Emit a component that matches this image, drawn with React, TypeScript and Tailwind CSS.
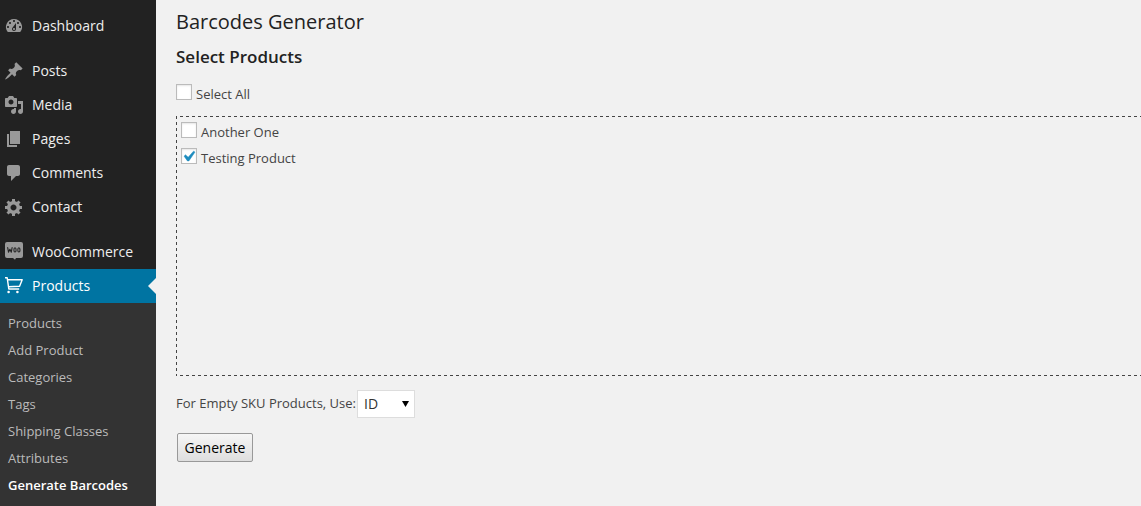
import React, { useState } from "react";

type IconProps = { children: React.ReactNode };

function Glyph({ children }: IconProps) {
  return (
    <svg viewBox="0 0 20 20" className="size-5 shrink-0 fill-current" aria-hidden="true">
      {children}
    </svg>
  );
}

const icons = {
  dashboard: (
    <path d="M3.76 16h12.48A7.998 7.998 0 0 0 10 3a7.998 7.998 0 0 0-6.24 13zM10 4c.55 0 1 .45 1 1s-.45 1-1 1-1-.45-1-1 .45-1 1-1zM6 6c.55 0 1 .45 1 1s-.45 1-1 1-1-.45-1-1 .45-1 1-1zm8 0c.55 0 1 .45 1 1s-.45 1-1 1-1-.45-1-1 .45-1 1-1zm-5.37 5.55L12 7v6c0 1.1-.9 2-2 2s-2-.9-2-2c0-.57.24-1.08.63-1.45zM4 10c.55 0 1 .45 1 1s-.45 1-1 1-1-.45-1-1 .45-1 1-1zm12 0c.55 0 1 .45 1 1s-.45 1-1 1-1-.45-1-1 .45-1 1-1zm-5 3c0-.55-.45-1-1-1s-1 .45-1 1 .45 1 1 1 1-.45 1-1z" />
  ),
  posts: (
    <path d="M10.44 3.02l1.82-1.82 6.36 6.35-1.83 1.82c-1.05-.68-2.48-.57-3.41.36l-.75.75c-.92.93-1.04 2.35-.35 3.41l-1.83 1.82-2.41-2.41-2.8 2.79c-.42.42-3.38 2.71-3.8 2.29s1.86-3.39 2.28-3.81l2.79-2.79L4.1 9.36l1.83-1.82c1.05.69 2.48.57 3.4-.36l.75-.75c.93-.92 1.05-2.35.36-3.41z" />
  ),
  media: (
    <path d="M13 11V4c0-.55-.45-1-1-1h-1.67L9 1H5L3.67 3H2c-.55 0-1 .45-1 1v7c0 .55.45 1 1 1h10c.55 0 1-.45 1-1zM7 4.5c1.38 0 2.5 1.12 2.5 2.5S8.38 9.5 7 9.5 4.5 8.38 4.5 7 5.62 4.5 7 4.5zM14 6h5v10.5c0 1.38-1.12 2.5-2.5 2.5S14 17.88 14 16.5s1.12-2.5 2.5-2.5c.17 0 .34.02.5.05V9h-3V6zm-4 8.05V13h2v3.5c0 1.38-1.12 2.5-2.5 2.5S7 17.88 7 16.5 8.12 14 9.5 14c.17 0 .34.02.5.05z" />
  ),
  pages: <path d="M6 15V2h10v13H6zm-1 1h8v2H3V5h2v11z" />,
  comments: (
    <path d="M5 2h9c1.1 0 2 .9 2 2v7c0 1.1-.9 2-2 2h-2l-5 5v-5H5c-1.1 0-2-.9-2-2V4c0-1.1.9-2 2-2z" />
  ),
  contact: (
    <path d="M18 12h-2.18c-.17.7-.44 1.35-.81 1.93l1.54 1.54-2.1 2.1-1.54-1.54c-.58.36-1.23.63-1.91.79V19H8v-2.18c-.68-.16-1.33-.43-1.91-.79l-1.54 1.54-2.12-2.12 1.54-1.54c-.36-.58-.63-1.23-.79-1.91H1V9.03h2.17c.16-.7.44-1.35.8-1.94L2.43 5.55l2.1-2.1 1.54 1.54c.58-.37 1.24-.64 1.93-.81V2h3v2.18c.68.16 1.33.43 1.91.79l1.54-1.54 2.12 2.12-1.54 1.54c.36.59.64 1.24.8 1.94H18V12zm-8.5 1.5c1.66 0 3-1.34 3-3s-1.34-3-3-3-3 1.34-3 3 1.34 3 3 3z" />
  ),
  woocommerce: (
    <>
      <path d="M3 0h14a2 2 0 0 1 2 2v12a2 2 0 0 1-2 2h-5l-1 1.8L9 16H3a2 2 0 0 1-2-2V2a2 2 0 0 1 2-2z" />
      <g fill="none" stroke="#222" strokeWidth="1.1" strokeLinecap="round" strokeLinejoin="round">
        <path d="M3.7 5.6l.8 4.6 1.4-3 1.4 3 .8-4.6" />
        <ellipse cx="11" cy="7.9" rx="1.1" ry="2.1" />
        <ellipse cx="14.9" cy="7.9" rx="1.1" ry="2.1" />
      </g>
    </>
  ),
  products: (
    <>
      <path
        d="M1 1.8h2.2l1.6 11.2h10.4M3.6 3.7h14.6l-2.6 6.5L4.4 10.8"
        fill="none"
        stroke="currentColor"
        strokeWidth="1.4"
        strokeLinejoin="round"
      />
      <circle cx="4.6" cy="16" r="1.3" />
      <circle cx="13.4" cy="16" r="1.3" />
    </>
  ),
};

type Item = { label: string; icon: React.ReactNode; active?: boolean };

const groups: Item[][] = [
  [{ label: "Dashboard", icon: icons.dashboard }],
  [
    { label: "Posts", icon: icons.posts },
    { label: "Media", icon: icons.media },
    { label: "Pages", icon: icons.pages },
    { label: "Comments", icon: icons.comments },
    { label: "Contact", icon: icons.contact },
  ],
  [
    { label: "WooCommerce", icon: icons.woocommerce },
    { label: "Products", icon: icons.products, active: true },
  ],
];

const submenu = [
  "Products",
  "Add Product",
  "Categories",
  "Tags",
  "Shipping Classes",
  "Attributes",
  "Generate Barcodes",
];

function MenuItem({ label, icon, active }: Item) {
  return (
    <li>
      <a
        href="#"
        className={
          active
            ? "relative flex h-[34px] items-center gap-2 bg-[#0074a2] pl-1 text-sm text-white"
            : "flex h-[34px] items-center gap-2 pl-1 text-sm text-[#eee]"
        }
      >
        <span className={active ? "text-white" : "text-[#999]"}>
          <Glyph>{icon}</Glyph>
        </span>
        {label}
        {active && (
          <span className="absolute top-1/2 right-0 -mt-2 border-8 border-l-0 border-transparent border-r-[#f1f1f1]" />
        )}
      </a>
    </li>
  );
}

function Sidebar() {
  return (
    <nav className="w-[156px] shrink-0 bg-[#222] pt-[9px]">
      <div className="flex flex-col gap-[11px]">
        {groups.map((items, i) => (
          <ul key={i}>
            {items.map((item) => (
              <MenuItem key={item.label} {...item} />
            ))}
          </ul>
        ))}
      </div>
      <ul className="bg-[#333] py-[7px] text-[13px]">
        {submenu.map((label) => (
          <li key={label}>
            <a
              href="#"
              className={
                label === "Generate Barcodes"
                  ? "block pl-2 leading-[27px] font-semibold text-white"
                  : "block pl-2 leading-[27px] text-[#bbb]"
              }
            >
              {label}
            </a>
          </li>
        ))}
      </ul>
    </nav>
  );
}

type CheckProps = { label: string; checked: boolean; onChange: (value: boolean) => void };

function Check({ label, checked, onChange }: CheckProps) {
  return (
    <label className="flex w-fit items-start gap-1 leading-5">
      <span className="relative size-4">
        <input
          type="checkbox"
          checked={checked}
          onChange={(e) => onChange(e.target.checked)}
          className="block size-4 appearance-none border border-[#bbb] bg-white shadow-[inset_0_1px_2px_rgba(0,0,0,0.1)]"
        />
        {checked && (
          <svg
            viewBox="0 0 20 20"
            className="pointer-events-none absolute -top-0.5 -left-[3px] size-[21px] fill-[#1e8cbe] stroke-[#1e8cbe] stroke-[0.5]"
            aria-hidden="true"
          >
            <path d="M14.83 4.89l1.34.94-5.81 8.38H9.02L5.78 9.67l1.34-1.25 2.57 2.4z" />
          </svg>
        )}
      </span>
      {label}
    </label>
  );
}

export default function App() {
  const [another, setAnother] = useState(false);
  const [testing, setTesting] = useState(true);

  return (
    <div className="flex h-screen overflow-hidden bg-[#f1f1f1] font-['Open_Sans',sans-serif] text-[13px] text-[#444]">
      <Sidebar />
      <main className="min-w-0 flex-1 pt-2 pl-5">
        <h1 className="text-xl leading-7 text-[#222]">Barcodes Generator</h1>
        <h2 className="mt-[9px] text-[17px] leading-6 font-semibold text-[#222]">Select Products</h2>
        <div className="mt-[15px]">
          <Check
            label="Select All"
            checked={another && testing}
            onChange={(v) => {
              setAnother(v);
              setTesting(v);
            }}
          />
        </div>
        <div className="mt-3 flex h-[260px] flex-col gap-1.5 overflow-auto bg-[linear-gradient(90deg,#444_50%,transparent_50%),linear-gradient(90deg,#444_50%,transparent_50%),linear-gradient(#444_50%,transparent_50%)] [background-size:6px_1px,6px_1px,1px_6px] [background-position:4px_0,4px_100%,0_0] [background-repeat:repeat-x,repeat-x,repeat-y] px-[5px] py-1.5">
          <Check label="Another One" checked={another} onChange={setAnother} />
          <Check label="Testing Product" checked={testing} onChange={setTesting} />
        </div>
        <div className="mt-3.5 flex items-start gap-px">
          <label htmlFor="sku" className="leading-[26px]">
            For Empty SKU Products, Use:
          </label>
          <span className="relative">
            <select
              id="sku"
              className="block h-7 w-[58px] appearance-none border border-[#ddd] bg-white pl-1.5 text-sm text-[#333]"
            >
              <option>ID</option>
              <option>SKU</option>
            </select>
            <svg
              viewBox="0 0 7 6"
              className="pointer-events-none absolute top-[11px] right-1.5 h-1.5 w-[7px] fill-black"
              aria-hidden="true"
            >
              <path d="M0 0h7L3.5 6z" />
            </svg>
          </span>
        </div>
        <button
          type="button"
          className="mt-[15px] ml-px h-[29px] min-w-[76px] rounded-xs border border-[#999] bg-linear-to-b from-[#f6f6f6] to-[#dedede] px-1.5 text-sm text-black"
        >
          Generate
        </button>
      </main>
    </div>
  );
}
